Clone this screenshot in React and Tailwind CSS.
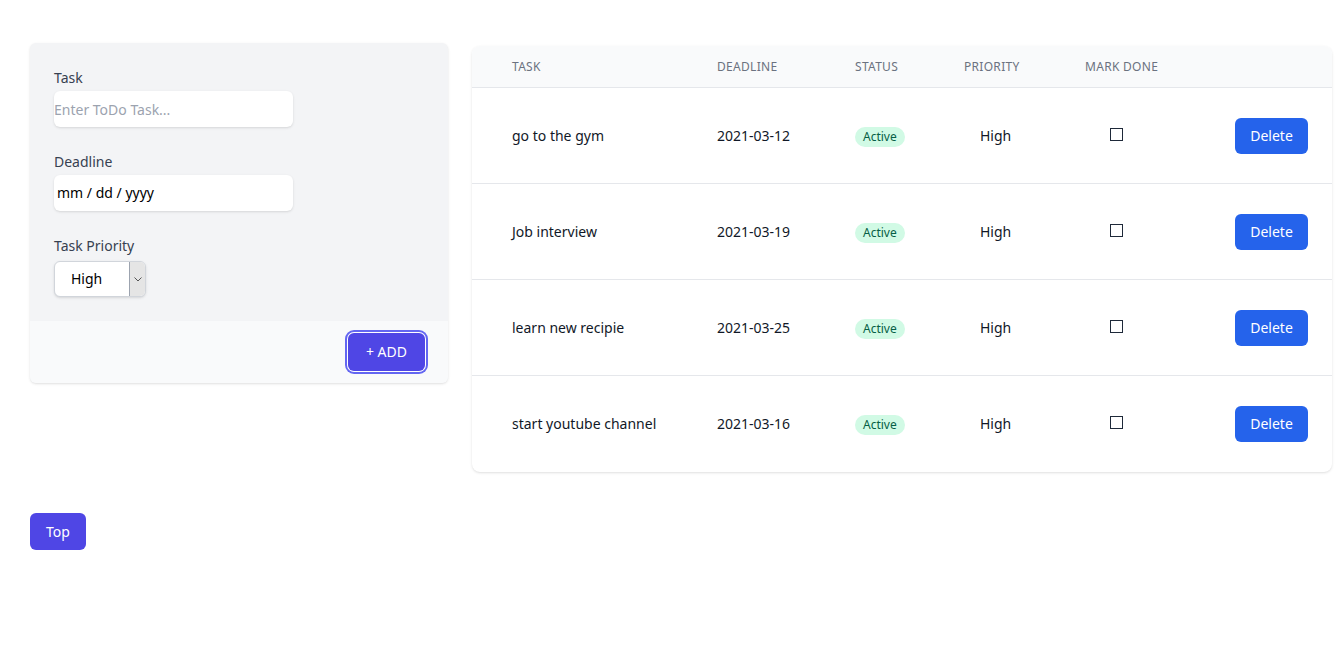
const TASKS = [
  { task: 'go to the gym', deadline: '2021-03-12' },
  { task: 'Job interview', deadline: '2021-03-19' },
  { task: 'learn new recipie', deadline: '2021-03-25' },
  { task: 'start youtube channel', deadline: '2021-03-16' },
]

const COLS = 'grid grid-cols-[205px_138px_109px_121px_1fr] items-center pl-10 pr-6'

function TaskForm() {
  return (
    <div className="w-[418px] shrink-0 rounded-md shadow overflow-hidden bg-[#f3f4f6]">
      <div className="px-6 pt-[25px] pb-6">
        <label className="block mb-[3px] text-sm leading-5 text-[#374151]">Task</label>
        <input
          type="text"
          placeholder="Enter ToDo Task..."
          className="block w-[239px] h-9 bg-white rounded-md text-sm text-gray-800 placeholder:text-[#9ca3af] outline-none shadow-sm"
        />
        <label className="block mt-[25px] mb-[3px] text-sm leading-5 text-[#374151]">Deadline</label>
        <div className="w-[239px] h-9 bg-white rounded-md shadow-sm flex items-center pl-[3px] text-sm text-black">
          mm / dd / yyyy
        </div>
        <label className="block mt-[25px] mb-[5px] text-sm leading-5 text-[#374151]">Task Priority</label>
        <div className="w-[92px] h-9 bg-white rounded-md border border-[#d1d5db] shadow-sm flex overflow-hidden">
          <span className="flex-1 flex items-center pl-4 text-sm text-black">High</span>
          <span className="w-[16px] bg-[#e5e5e5] border-l border-[#9ca3af] flex items-center justify-center">
            <svg width="8" height="5" viewBox="0 0 8 5" fill="none" stroke="#555" strokeWidth="1">
              <path d="M0.5 0.5 L4 4 L7.5 0.5" />
            </svg>
          </span>
        </div>
      </div>
      <div className="bg-[#f9fafb] h-[62px] px-6 flex items-center justify-end">
        <button
          type="button"
          className="w-[77px] h-[38px] mr-[-1px] rounded-md bg-[#4f46e5] text-white text-sm flex items-center justify-center ring-2 ring-[#6366f1] ring-offset-1"
        >
          + ADD
        </button>
      </div>
    </div>
  )
}

function TaskTable() {
  return (
    <div className="flex-1 mt-[3px] rounded-lg shadow bg-white overflow-hidden">
      <div className={`${COLS} h-[42px] bg-[#f9fafb] border-b border-[#e5e7eb] text-xs uppercase tracking-wide text-[#6b7280]`}>
        <span>Task</span>
        <span>Deadline</span>
        <span>Status</span>
        <span>Priority</span>
        <span>Mark Done</span>
      </div>
      {TASKS.map((t, i) => (
        <div
          key={t.task}
          className={`${COLS} h-[96px] text-sm text-[#111827] ${i < TASKS.length - 1 ? 'border-b border-[#e5e7eb]' : ''}`}
        >
          <span>{t.task}</span>
          <span>{t.deadline}</span>
          <span>
            <span className="inline-flex items-center px-2 h-5 mt-[2px] rounded-full bg-[#d1fae5] text-[#065f46] text-xs">
              Active
            </span>
          </span>
          <span className="pl-4">High</span>
          <span className="flex items-center justify-between">
            <span className="ml-[25px] mb-[3px] w-[13px] h-[13px] border border-gray-800 bg-white" />
            <button type="button" className="w-[73px] h-[36px] rounded-md bg-[#2563eb] text-white text-sm">
              Delete
            </button>
          </span>
        </div>
      ))}
    </div>
  )
}

export default function App() {
  return (
    <div className="min-h-screen bg-white pl-[30px] pr-[7px] pt-[43px]" style={{ fontFamily: '"Noto Sans", "Open Sans", sans-serif' }}>
      <div className="flex items-start gap-6">
        <TaskForm />
        <TaskTable />
      </div>
      <button type="button" className="mt-[41px] w-14 h-[37px] rounded-md bg-[#4f46e5] text-white text-sm">
        Top
      </button>
    </div>
  )
}
